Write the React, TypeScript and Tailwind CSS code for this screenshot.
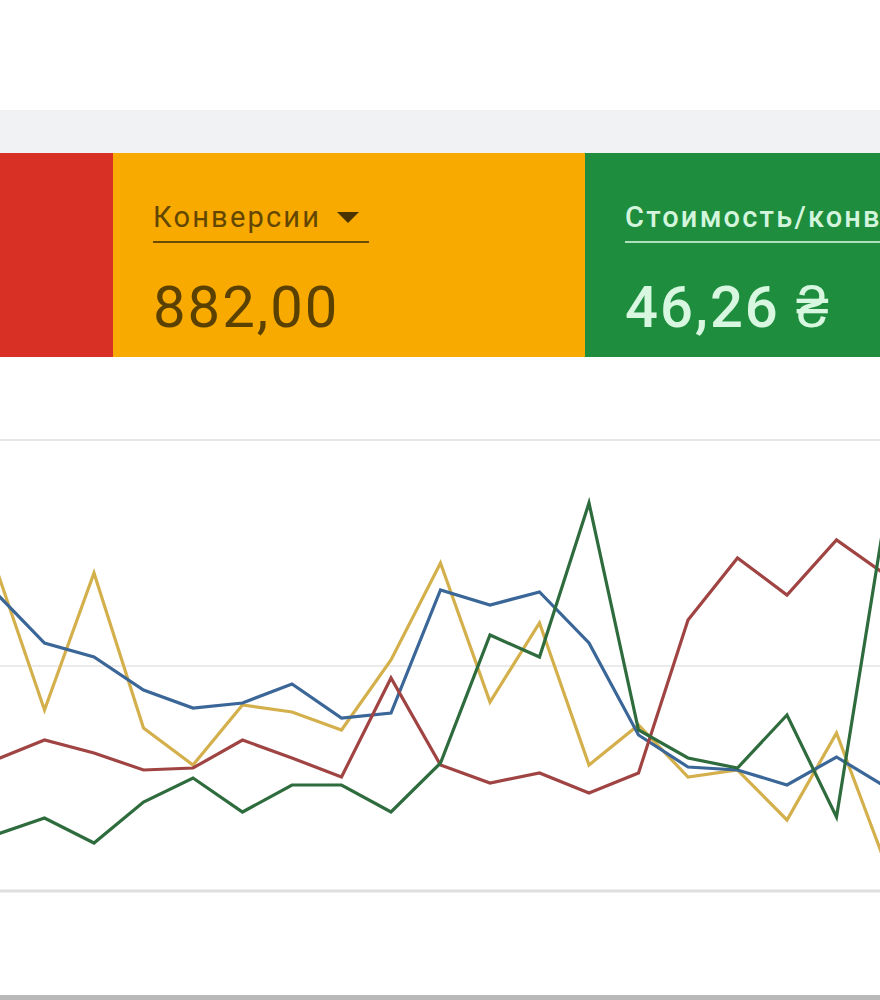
import React from 'react';

type Series = { color: string; ys: number[] };

const CHART_TOP = 357;

const xs = Array.from({ length: 19 }, (_, i) => -5 + 49.5 * i);

const series: Series[] = [
  {
    color: '#d4b04c',
    ys: [565, 710, 573, 728, 765, 705, 712, 730, 660, 563, 702, 623, 765, 725, 777, 770, 820, 733, 865],
  },
  {
    color: '#3a6698',
    ys: [592, 643, 657, 690, 708, 703, 684, 718, 713, 590, 605, 592, 643, 735, 767, 770, 785, 757, 787],
  },
  {
    color: '#a04443',
    ys: [760, 740, 753, 770, 768, 740, 758, 777, 678, 765, 783, 773, 793, 773, 620, 558, 595, 540, 575],
  },
  {
    color: '#2e6b3d',
    ys: [835, 818, 843, 802, 778, 812, 785, 785, 812, 763, 635, 657, 503, 730, 758, 768, 715, 817, 510],
  },
];

const toPoints = (ys: number[]) =>
  ys.map((y, i) => `${xs[i].toFixed(1)},${y - CHART_TOP}`).join(' ');

const Chart: React.FC = () => (
  <div className="h-[638px] w-full bg-white">
    <svg width="880" height="638" viewBox="0 0 880 638" className="block">
      <line x1="0" x2="880" y1={440 - CHART_TOP} y2={440 - CHART_TOP} stroke="#e6e6e6" strokeWidth="2" />
      <line x1="0" x2="880" y1={666 - CHART_TOP} y2={666 - CHART_TOP} stroke="#ebebeb" strokeWidth="2" />
      <line x1="0" x2="880" y1={891 - CHART_TOP} y2={891 - CHART_TOP} stroke="#dedede" strokeWidth="3" />
      {series.map((s) => (
        <polyline
          key={s.color}
          points={toPoints(s.ys)}
          fill="none"
          stroke={s.color}
          strokeWidth="3.2"
          strokeLinejoin="miter"
        />
      ))}
    </svg>
  </div>
);

const App: React.FC = () => {
  return (
    <div className="w-[880px] h-[1000px] overflow-hidden bg-white font-['Roboto',sans-serif] border-b-[5px] border-[#b9b9b9]">
      <div className="h-[110px] bg-white" />
      <div className="h-[43px] bg-[#f0f2f4]" />

      <div className="flex h-[204px]">
        <div className="w-[113px] shrink-0 bg-[#d93025]" />

        <div className="w-[472px] shrink-0 bg-[#f8aa00] pl-10 pt-12">
          <div className="inline-flex items-center gap-4 border-b-2 border-[#6a4c00] pb-2 pr-[10px] text-[#634700]">
            <span className="text-[29px] leading-8 tracking-[2.2px]">Конверсии</span>
            <svg width="22" height="11" viewBox="0 0 22 11">
              <polygon points="0,0 22,0 11,11" fill="#4a3500" />
            </svg>
          </div>
          <div className="mt-[35px] text-[58px] leading-none tracking-[2px] text-[#5a4100]">882,00</div>
        </div>

        <div className="flex-1 overflow-hidden bg-[#1e8e3e] pl-10 pt-12">
          <div className="flex items-center border-b-2 border-[#aee0bb] pb-2 whitespace-nowrap text-[#d4f5dd]">
            <span className="text-[29px] leading-8 tracking-[2.2px] font-medium">Стоимость/конв.</span>
          </div>
          <div className="mt-[35px] text-[58px] leading-none tracking-[2px] font-medium text-[#d8f7e0] whitespace-nowrap">
            46,26 ₴
          </div>
        </div>
      </div>

      <Chart />
    </div>
  );
};

export default App;
